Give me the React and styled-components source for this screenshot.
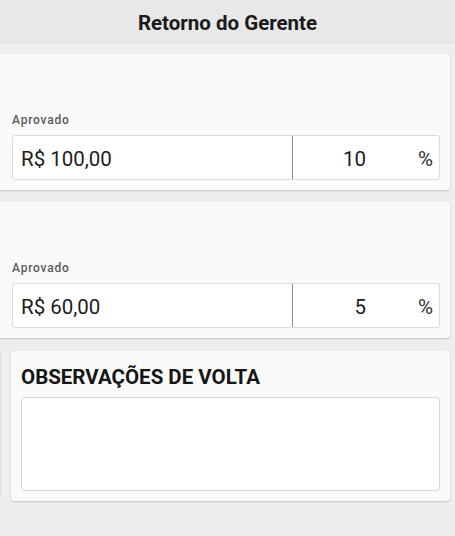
import React from "react";
import styled, { createGlobalStyle } from "styled-components";

const GlobalStyle = createGlobalStyle`
  html, body {
    margin: 0;
    padding: 0;
    background: #eeeeee;
    font-family: Roboto, "Liberation Sans", sans-serif;
    overflow: hidden;
  }
`;

const entries = [
  { value: "R$ 100,00", percent: "10" },
  { value: "R$ 60,00", percent: "5" },
];

const Apuracao = ({ value, percent }) => {
  return (
    <Card>
      <Label>Aprovado</Label>
      <InputRow>
        <ValueField>{value}</ValueField>
        <PercentField>
          <PercentValue>{percent}</PercentValue>
          <PercentSign>%</PercentSign>
        </PercentField>
      </InputRow>
    </Card>
  );
};

export default function App() {
  return (
    <Page>
      <GlobalStyle />
      <Header>Retorno do Gerente</Header>
      <List>
        {entries.map((e, i) => (
          <Apuracao key={i} value={e.value} percent={e.percent} />
        ))}
        <ObsRow>
          <Peek />
          <ObsCard>
            <ObsTitle>OBSERVAÇÕES DE VOLTA</ObsTitle>
            <ObsArea />
          </ObsCard>
        </ObsRow>
      </List>
    </Page>
  );
}

const Page = styled.div`
  width: 455px;
  height: 536px;
  background: #eeeeee;
  overflow: hidden;
`;

const Header = styled.div`
  height: 44px;
  background: #e8e8e8;
  display: flex;
  align-items: center;
  justify-content: center;
  font-size: 20.5px;
  font-weight: 700;
  color: #1a1a1a;
  padding-top: 1px;
  box-sizing: border-box;
`;

const List = styled.div`
  display: flex;
  flex-direction: column;
  gap: 12px;
  padding-top: 10px;
`;

const Card = styled.div`
  margin: 0 5px 0 -6px;
  padding: 59px 10px 10px 18px;
  background: #fafafa;
  border-radius: 4px;
  box-shadow: 0 1px 2px rgba(0, 0, 0, 0.18);
`;

const Label = styled.div`
  font-size: 12px;
  font-weight: 500;
  letter-spacing: 0.8px;
  color: #5a5a5a;
  line-height: 14px;
  margin-bottom: 8px;
`;

const InputRow = styled.div`
  display: flex;
  height: 45px;
  background: #ffffff;
  border: 1px solid #dcdcdc;
  border-radius: 3px;
  box-sizing: border-box;
`;

const ValueField = styled.div`
  flex: 0 0 280px;
  display: flex;
  align-items: center;
  padding: 2px 0 0 8px;
  box-sizing: border-box;
  border-right: 1px solid #8c8c8c;
  font-size: 20.5px;
  color: #1c1c1c;
`;

const PercentField = styled.div`
  flex: 1;
  display: flex;
  align-items: center;
  padding: 2px 6px 0 0;
  font-size: 20.5px;
  color: #1c1c1c;
`;

const PercentValue = styled.span`
  width: 73px;
  text-align: right;
`;

const PercentSign = styled.span`
  margin-left: auto;
  color: #333333;
`;

const ObsRow = styled.div`
  display: flex;
  align-items: flex-start;
  gap: 9px;
  margin-top: 1px;
`;

const Peek = styled.div`
  width: 2px;
  height: 145px;
  background: #e2e2e2;
  box-shadow: 1px 0 0 #f6f6f6;
`;

const ObsCard = styled.div`
  width: 439px;
  box-sizing: border-box;
  padding: 14px 10px 10px 10px;
  background: #fafafa;
  border-radius: 4px;
  box-shadow: 0 1px 2px rgba(0, 0, 0, 0.18);
`;

const ObsTitle = styled.div`
  font-size: 20.5px;
  font-weight: 700;
  color: #151515;
  line-height: 24px;
  margin-bottom: 8px;
`;

const ObsArea = styled.div`
  height: 94px;
  background: #ffffff;
  border: 1px solid #d6d6d6;
  border-radius: 3px;
  box-sizing: border-box;
`;
